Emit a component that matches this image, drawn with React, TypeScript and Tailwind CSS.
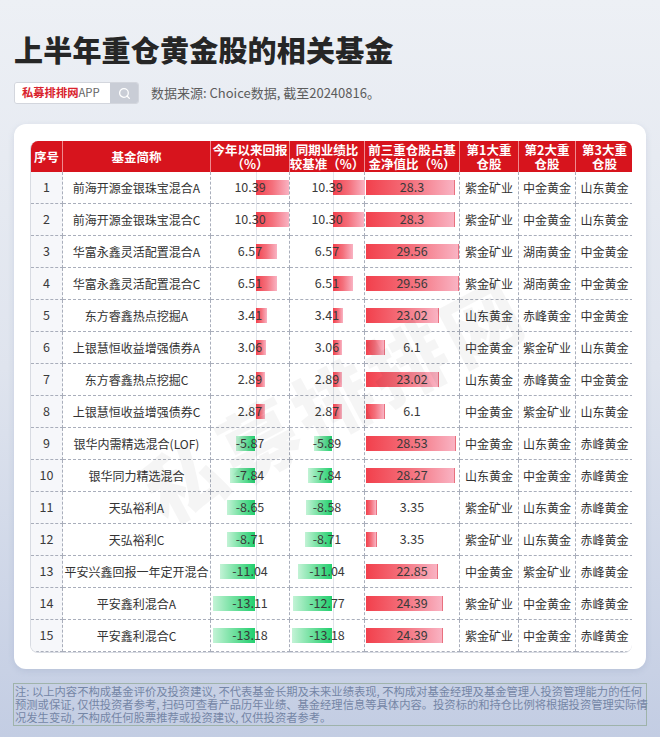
import { Search } from "lucide-react";

type Row = {
  no: number;
  name: string;
  ytd: number;
  bench: number;
  top3: number;
  s1: string;
  s2: string;
  s3: string;
};

const rows: Row[] = [
  { no: 1, name: "前海开源金银珠宝混合A", ytd: 10.39, bench: 10.39, top3: 28.3, s1: "紫金矿业", s2: "中金黄金", s3: "山东黄金" },
  { no: 2, name: "前海开源金银珠宝混合C", ytd: 10.3, bench: 10.3, top3: 28.3, s1: "紫金矿业", s2: "中金黄金", s3: "山东黄金" },
  { no: 3, name: "华富永鑫灵活配置混合A", ytd: 6.57, bench: 6.57, top3: 29.56, s1: "紫金矿业", s2: "湖南黄金", s3: "中金黄金" },
  { no: 4, name: "华富永鑫灵活配置混合C", ytd: 6.51, bench: 6.51, top3: 29.56, s1: "紫金矿业", s2: "湖南黄金", s3: "中金黄金" },
  { no: 5, name: "东方睿鑫热点挖掘A", ytd: 3.41, bench: 3.41, top3: 23.02, s1: "山东黄金", s2: "赤峰黄金", s3: "中金黄金" },
  { no: 6, name: "上银慧恒收益增强债券A", ytd: 3.06, bench: 3.06, top3: 6.1, s1: "中金黄金", s2: "紫金矿业", s3: "山东黄金" },
  { no: 7, name: "东方睿鑫热点挖掘C", ytd: 2.89, bench: 2.89, top3: 23.02, s1: "山东黄金", s2: "赤峰黄金", s3: "中金黄金" },
  { no: 8, name: "上银慧恒收益增强债券C", ytd: 2.87, bench: 2.87, top3: 6.1, s1: "中金黄金", s2: "紫金矿业", s3: "山东黄金" },
  { no: 9, name: "银华内需精选混合(LOF)", ytd: -5.87, bench: -5.89, top3: 28.53, s1: "中金黄金", s2: "山东黄金", s3: "赤峰黄金" },
  { no: 10, name: "银华同力精选混合", ytd: -7.84, bench: -7.84, top3: 28.27, s1: "山东黄金", s2: "中金黄金", s3: "赤峰黄金" },
  { no: 11, name: "天弘裕利A", ytd: -8.65, bench: -8.58, top3: 3.35, s1: "紫金矿业", s2: "山东黄金", s3: "赤峰黄金" },
  { no: 12, name: "天弘裕利C", ytd: -8.71, bench: -8.71, top3: 3.35, s1: "紫金矿业", s2: "山东黄金", s3: "赤峰黄金" },
  { no: 13, name: "平安兴鑫回报一年定开混合", ytd: -11.04, bench: -11.04, top3: 22.85, s1: "中金黄金", s2: "紫金矿业", s3: "赤峰黄金" },
  { no: 14, name: "平安鑫利混合A", ytd: -13.11, bench: -12.77, top3: 24.39, s1: "紫金矿业", s2: "中金黄金", s3: "赤峰黄金" },
  { no: 15, name: "平安鑫利混合C", ytd: -13.18, bench: -13.18, top3: 24.39, s1: "紫金矿业", s2: "中金黄金", s3: "赤峰黄金" },
];

const cols = "grid grid-cols-[32px_148px_79px_75px_95px_59px_57px_57px]";
const cell =
  "relative flex items-center justify-center h-[32px] border-b border-r border-dashed border-[#a9aebb] whitespace-nowrap";

const RED = "linear-gradient(90deg, #f2404c 0%, #f4707c 50%, #f9b3c3 100%)";
const GREEN = "linear-gradient(270deg, #22cf6e 0%, #6fe09e 50%, #c3f3d6 100%)";

// bar that grows out of a zero line placed `zero` px from the cell's left edge
function BarCell({ value, zero, width, scale }: { value: number; zero: number; width: number; scale: number }) {
  const w = Math.abs(value) * scale;
  const pos = value >= 0;
  return (
    <div className={cell}>
      <div className="absolute top-0 bottom-0 w-px bg-[#e1e4ea]" style={{ left: zero }} />
      <div
        className="absolute top-[8px] h-[15px]"
        style={
          pos
            ? { left: zero, width: w, background: RED }
            : { right: width - zero, width: w, background: GREEN }
        }
      />
      <span className="relative text-[12.5px] text-[#3a3a3a]">{value.toFixed(2)}</span>
    </div>
  );
}

function Top3Cell({ value }: { value: number }) {
  return (
    <div className={cell}>
      <div
        className="absolute left-[1px] top-[8px] h-[15px] border-r border-[#e9707e]"
        style={{ width: value * 3.15, background: RED }}
      />
      <span className="relative text-[12.5px] text-[#3a3a3a]">{value}</span>
    </div>
  );
}

export default function App() {
  const heads = [
    ["序号"],
    ["基金简称"],
    ["今年以来回报", "（%）"],
    ["同期业绩比", "较基准（%）"],
    ["前三重仓股占基", "金净值比（%）"],
    ["第1大重", "仓股"],
    ["第2大重", "仓股"],
    ["第3大重", "仓股"],
  ];

  return (
    <div
      className="w-[660px] h-[737px] overflow-hidden bg-gradient-to-b from-[#edf0f5] via-[#dfe4ee] to-[#c3cde3]"
      style={{ fontFamily: '"Noto Sans CJK SC", "Noto Sans", sans-serif' }}
    >
      <div className="pt-[31px] px-[14px]">
        <h1 className="text-[29px] leading-[36px] font-black text-[#262626] tracking-[0.2px]">
          上半年重仓黄金股的相关基金
        </h1>

        <div className="mt-[15px] flex items-center gap-[12px]">
          <div className="flex h-[22px] rounded-[3px] border border-[#d3d6dd] overflow-hidden">
            <div className="w-[95px] bg-white flex items-center pl-[7px] text-[11.3px] leading-none">
              <span className="text-[#d9232d] font-bold">私募排排网</span>
              <span className="text-[#666]">APP</span>
            </div>
            <div className="w-[28px] bg-[#c9cdd6] flex items-center justify-center">
              <Search size={13} strokeWidth={2.4} color="#ffffff" />
            </div>
          </div>
          <span className="text-[13px] text-[#5c5c5c]">数据来源: Choice数据, 截至20240816。</span>
        </div>
      </div>

      <div className="relative mt-[20px] mx-[14px] w-[632px] bg-white rounded-[12px] pt-[17px] pl-[16px] pr-[14px] pb-[16px] shadow-[0_2px_6px_rgba(120,135,170,0.2)]">
        <div className="w-[602px] rounded-[8px] border-l border-b border-[#d8dbe2] overflow-hidden">
          <div className={`${cols} bg-[#d7141d] h-[31px]`}>
            {heads.map((h, i) => (
              <div
                key={i}
                className={`flex flex-col items-center justify-center text-white font-bold text-[12.5px] leading-[13.5px] whitespace-nowrap ${
                  i < heads.length - 1 ? "border-r border-[#ef8a8f]" : ""
                }`}
              >
                {h.map((t) => (
                  <span key={t}>{t}</span>
                ))}
              </div>
            ))}
          </div>

          {rows.map((r) => (
            <div key={r.no} className={cols}>
              <div className={`${cell} bg-[#f6f7fa] text-[12.5px] text-[#3a3a3a]`}>{r.no}</div>
              <div className={`${cell} text-[12px] text-[#333]`}>{r.name}</div>
              <BarCell value={r.ytd} zero={45} width={79} scale={3.2} />
              <BarCell value={r.bench} zero={43} width={75} scale={3.05} />
              <Top3Cell value={r.top3} />
              <div className={`${cell} text-[12px] text-[#333]`}>{r.s1}</div>
              <div className={`${cell} text-[12px] text-[#333]`}>{r.s2}</div>
              <div className={`${cell} text-[12px] text-[#333] border-r-0`}>{r.s3}</div>
            </div>
          ))}
        </div>

        {/* watermark */}
        <div className="pointer-events-none absolute left-[110px] top-[215px] rotate-[-28deg] text-[78px] font-black text-black/[0.04] whitespace-nowrap tracking-[6px]">
          私募排排网
        </div>
      </div>

      <div className="mt-[14px] mx-[13px] w-[634px] border border-[#9fb3aa] px-[1px] py-[1px] text-[11.3px] leading-[13px] text-[#7586a6] whitespace-nowrap">
        <div>注: 以上内容不构成基金评价及投资建议, 不代表基金长期及未来业绩表现, 不构成对基金经理及基金管理人投资管理能力的任何</div>
        <div>预测或保证, 仅供投资者参考, 扫码可查看产品历年业绩、基金经理信息等具体内容。投资标的和持仓比例将根据投资管理实际情</div>
        <div>况发生变动, 不构成任何股票推荐或投资建议, 仅供投资者参考。</div>
      </div>
    </div>
  );
}
